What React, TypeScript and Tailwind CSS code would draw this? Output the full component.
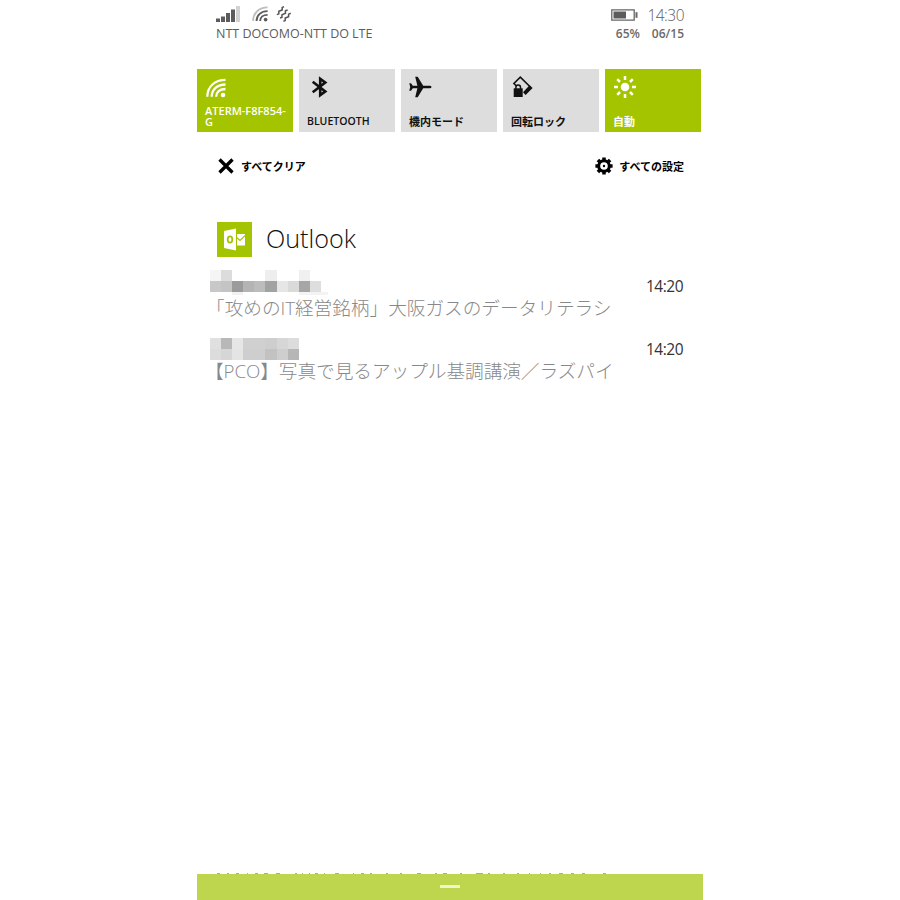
import React from "react";

const WifiIcon = ({ className, faded }: { className: string; faded?: boolean }) => (
  <svg viewBox="0 0 20 20" className={className} fill="none" stroke="currentColor">
    <path d="M1.300 18.800C1.300 8.800 8.800 1.800 19.500 1.800" strokeWidth="2.200" opacity={faded ? 0.4 : 1} />
    <path d="M5.700 18.800C5.700 11.500 11.300 6.500 19.500 6.500" strokeWidth="2.300" />
    <path d="M10.200 18.800C10.200 14.200 13.800 11 19.500 11" strokeWidth="2.300" />
    <circle cx="17" cy="17" r="2.300" fill="currentColor" stroke="none" />
  </svg>
);

const SignalIcon = () => (
  <svg viewBox="0 0 24 16" className="w-6 h-4" fill="#5c5c5c">
    <path d="M0 12.500h4V16H0zM5 10.500h4V16H5zM10 7h4v9h-4zM15 3.500h4V16h-4z" />
    <path d="M20 0h4v16h-4z" fill="#d2d2d2" />
  </svg>
);

const VibrateIcon = () => (
  <svg viewBox="0 0 16 16" className="w-4 h-4" fill="none" stroke="#555" strokeWidth="1.500" strokeLinejoin="round">
    <path d="M.8 8.600 2.800 7.900V5.300L6.200 4V1.400L8 .8" />
    <path d="M4 12 6 11.300V8.700L9.400 7.400V4.800L11.600 4" />
    <path d="M7.400 15.300 9.200 14.600V12L12.600 10.700V8.100L14.800 7.300" />
  </svg>
);

const BatteryIcon = () => (
  <svg viewBox="0 0 27 12" className="w-[27px] h-3">
    <path d="M.8.800h22.400v10.400H.8z" fill="none" stroke="#666" strokeWidth="1.300" />
    <path d="M2.500 2.500H15v7H2.500z" fill="#5c5c5c" />
    <path d="M24.500 3.200h2v5.600h-2z" fill="#666" />
  </svg>
);

const BluetoothIcon = () => (
  <svg viewBox="0 0 16 22" className="w-[17px] h-[22px]" fill="none" stroke="#111" strokeWidth="2.600">
    <path d="M1.200 5.700 13.800 15.400 8.700 19.200V2.800l5.100 3.800L1.200 16.300" />
  </svg>
);

const PlaneIcon = () => (
  <svg viewBox="0 0 23 22" className="w-[23px] h-[22px]" fill="#111">
    <path d="M22.500 11c0-1-1-1.300-2.500-1.300h-5.800L8.700.8H6.200l2.200 8.900H3.800L2 7.200H.3l.9 3.800-.9 3.800H2l1.800-2.500h4.600l-2.200 8.900h2.500l5.500-8.900H20c1.500 0 2.500-.3 2.500-1.300z" />
  </svg>
);

const RotationLockIcon = () => (
  <svg viewBox="0 0 22 22" className="w-[22px] h-[22px]">
    <path d="M4.200 9.800 1.900 7.500 8.300 1.200 18.600 11.200" fill="none" stroke="#111" strokeWidth="1.600" />
    <path d="m17.600 9.300 3 2.700-7 6.900-2.600-2.600z" fill="#111" />
    <path d="M1.700 12.300h9V21h-9z" fill="#111" />
    <path d="M3.900 13v-1.800a2.300 2.300 0 0 1 4.600 0V13" fill="none" stroke="#111" strokeWidth="1.500" />
  </svg>
);

const SunIcon = () => (
  <svg viewBox="0 0 24 24" className="w-6 h-6" fill="#fff" stroke="#fff">
    <circle cx="12" cy="12" r="4.300" stroke="none" />
    <path
      d="M12 1v4M12 19v4M1 12h4M19 12h4M4.200 4.200 7 7M17 17l2.800 2.800M4.200 19.800 7 17M17 7l2.800-2.800"
      strokeWidth="2.500"
    />
  </svg>
);

const GearIcon = () => (
  <svg viewBox="0 0 18 18" className="w-[18px] h-[18px]" fill="none" stroke="#000">
    <circle cx="9" cy="9" r="5.300" strokeWidth="3" />
    <path
      d="M9 .4v3M9 14.600v3M.4 9h3M14.600 9h3M2.900 2.900 5 5M13 13l2.100 2.100M2.900 15.100 5 13M13 5l2.100-2.100"
      strokeWidth="3.500"
    />
    <circle cx="9" cy="9" r="1.200" fill="#000" stroke="none" />
  </svg>
);

const OutlookIcon = () => (
  <svg viewBox="0 0 35 35" className="w-[35px] h-[35px] bg-[#a4c400]">
    <path d="m7 9 12-2.500v22L7 26z" fill="#fff" />
    <ellipse cx="13" cy="17.500" rx="2.300" ry="3.100" fill="none" stroke="#a4c400" strokeWidth="1.800" />
    <path d="M20 12h8v11.500h-8z" fill="#fff" />
    <path d="m20 15.800 3 2.700 5.200-5.200" fill="none" stroke="#a4c400" strokeWidth="1.200" />
  </svg>
);

const tiles = [
  { label: "ATERM-F8F854-G", active: true, icon: <WifiIcon className="w-5 h-5 mt-[9px] ml-px" /> },
  { label: "BLUETOOTH", icon: <div className="pl-1 pt-[7px]"><BluetoothIcon /></div> },
  { label: "機内モード", icon: <div className="pt-[7px]"><PlaneIcon /></div> },
  { label: "回転ロック", icon: <div className="pl-px pt-[7px]"><RotationLockIcon /></div> },
  { label: "自動", active: true, icon: <div className="pt-1.5"><SunIcon /></div> },
];

const mails = [
  {
    title: "「攻めのIT経営銘柄」大阪ガスのデータリテラシ",
    time: "14:20",
    columns: "grid-cols-[repeat(10,11.1px)]",
    offset: "",
    titleStyle: "-ml-[4px] tracking-[-0.05px]",
    sender: [
      "#f5f5f5", "#dcdcdc", "#fff", "#fff", "#fff", "#eee", "#fff", "#fff", "#f0f0f0", "#fff",
      "#c8c8c8", "#c4c4c4", "#9b9b9b", "#b4b4b4", "#bcbcbc", "#a2a2a2", "#e6e6e6", "#dadada", "#a6a6a6", "#dedede",
    ],
  },
  {
    title: "【PCO】写真で見るアップル基調講演／ラズパイ",
    time: "14:20",
    columns: "grid-cols-[repeat(8,11.1px)]",
    offset: "pt-[5px]",
    titleStyle: "-ml-[5px] tracking-[-0.07px]",
    sender: [
      "#e0e0e0", "#b8b8b8", "#e6e6e6", "#d0d0d0", "#d0d0d0", "#cecece", "#d6d6d6", "#dcdcdc",
      "#dcdcdc", "#d6d6d6", "#e4e4e4", "#cecece", "#cecece", "#c2c2c2", "#cecece", "#b6b6b6",
    ],
  },
];

const StatusBar = () => (
  <header className="h-[69px] pl-[19px] pr-[19px] pt-[5px] flex justify-between text-[#5c5c5c]">
    <div>
      <div className="flex items-center h-[17px]">
        <SignalIcon />
        <WifiIcon className="w-4 h-4 ml-3" faded />
        <div className="ml-2">
          <VibrateIcon />
        </div>
      </div>
      <div className="flex text-[12.5px] leading-[23px] whitespace-nowrap">
        <span className="w-[133px] overflow-hidden">NTT DOCOMO-NTT DO</span>
        <span className="ml-[3px]">LTE</span>
      </div>
    </div>
    <div className="flex flex-col items-end">
      <div className="flex items-center h-[19px]">
        <BatteryIcon />
        <span className="ml-[9px] pt-px text-[15.500px] font-light leading-[19px] tracking-[-0.5px]">14:30</span>
      </div>
      <div className="flex gap-3 text-[12px] leading-[19px] font-semibold text-[#6a6a6a]">
        <span>65%</span>
        <span>06/15</span>
      </div>
    </div>
  </header>
);

const App = () => {
  return (
    <main className="w-[900px] h-[900px] bg-white overflow-hidden font-['Open_Sans','Noto_Sans_CJK_JP',sans-serif]">
      <div className="ml-[197px] w-[506px] h-full flex flex-col">
        <StatusBar />
        <div className="flex gap-[6.1px]">
          {tiles.map(({ label, active, icon }) => (
            <div
              key={label}
              className={`w-[95.9px] h-[63px] px-2 flex flex-col justify-between shrink-0 ${
                active ? "bg-[#a4c400] text-white" : "bg-[#ddd] text-[#111]"
              }`}
            >
              {icon}
              <p
                className={`leading-[11px] font-semibold pb-[5px] w-[86px] ${
                  label === "BLUETOOTH" ? "text-[10.500px]" : "text-[11px]"
                }`}
              >
                {label}
              </p>
            </div>
          ))}
        </div>
        <div className="h-[90px] pt-[25px] pl-[21px] pr-[18px] flex justify-between text-black text-[11px] font-bold leading-[18px]">
          <div className="flex h-[18px] items-center">
            <svg viewBox="0 0 16 16" className="w-4 h-4" stroke="#000" strokeWidth="3.300">
              <path d="m1.500 1.500 13 13M14.500 1.500l-13 13" />
            </svg>
            <span className="ml-[7px] pt-0.5">すべてクリア</span>
          </div>
          <div className="flex h-[18px] items-center">
            <GearIcon />
            <span className="ml-[6px] mr-px pt-0.5">すべての設定</span>
          </div>
        </div>
        <div className="h-12 pl-5 flex items-start">
          <OutlookIcon />
          <h1 className="ml-[14px] text-[25.200px] font-light leading-[33px] text-[#111]">Outlook</h1>
        </div>
        {mails.map(({ title, time, columns, sender, offset, titleStyle }) => (
          <div key={title} className="flex justify-between h-[63px] pl-[13px] pr-5">
            <div className="flex flex-col">
              <div className={`h-[25px] ${offset}`}>
                <div className={`grid auto-rows-[11px] ${columns}`}>
                  {sender.map((color, n) => (
                    <div key={n} style={{ backgroundColor: color }} />
                  ))}
                </div>
                {/* faint last strip of the blurred sender name */}
                {offset === "" && (
                  <div className="flex h-[3px]">
                    <div className="ml-[22px] w-[11px] bg-[#f2f2f2]" />
                    <div className="ml-[56px] w-[29px] bg-[#f3f3f3]" />
                  </div>
                )}
              </div>
              <p
                className={`text-[18.700px] leading-[26px] font-light text-[#888] whitespace-nowrap ${titleStyle}`}
              >
                {title}
              </p>
            </div>
            <span className="text-[15.500px] leading-[32px] tracking-[-0.5px] text-[#333]">{time}</span>
          </div>
        ))}
        <footer className="mt-auto">
          <svg viewBox="0 0 506 2" className="block w-[506px] h-0.5">
            <path
              d="M20 1.500h3m7 0h2m7 0h3m8 0h1m7 0h3m6 0h4m8 0h4m15 0h2m5 0h1m6 0h1m5 0h3m6 0h1m10 0h4m14 0h1m7 0h3m6 0h2m14 0h2m12 0h2m15 0h4m14 0h2m6 0h4m13 0h2m14 0h7m5 0h2m13 0h2m12 0h2m10 0h1m10 0h1m8 0h2m8 0h4m8 0h3m8 0h3m18 0h3"
              stroke="#a9ad98"
              strokeWidth="1"
            />
          </svg>
          <div className="h-[26px] bg-[#bed64e] flex justify-center">
            <div className="mt-[11px] w-5 h-[3px] bg-[#f0f6cc]" />
          </div>
        </footer>
      </div>
    </main>
  );
};

export default App;
